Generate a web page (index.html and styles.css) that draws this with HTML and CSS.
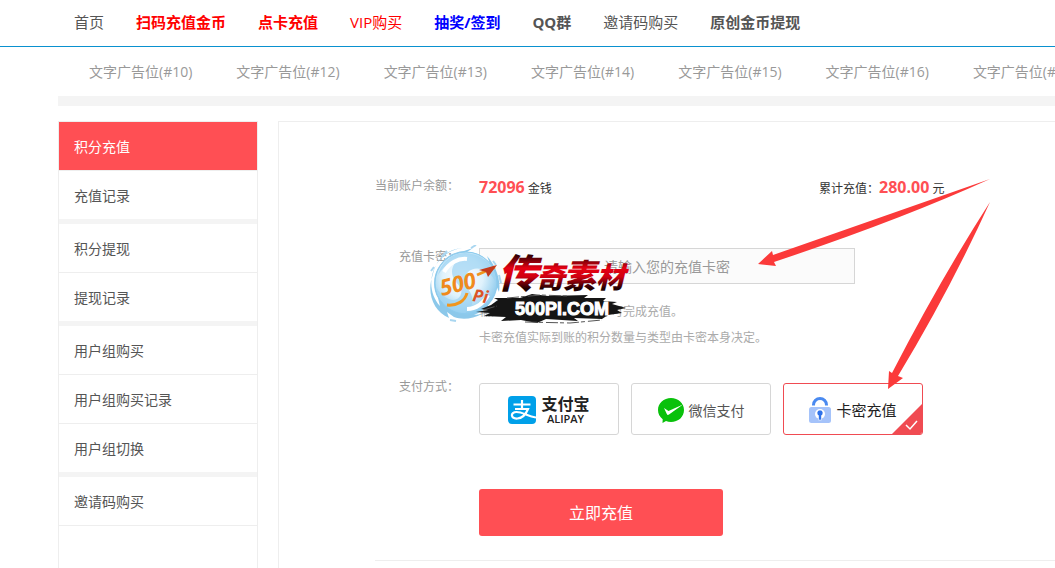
FILE: index.html
```html
<!DOCTYPE html>
<html lang="zh-CN">
<head>
	<meta charset="utf-8">
	<title>积分充值</title>
	<meta name="viewport" content="width=device-width, initial-scale=1">
	<link rel="stylesheet" href="styles.css">
</head>
<body>
	<header class="header">
		<nav class="nav">
			<a href="#">首页</a>
			<a href="#" class="red bold">扫码充值金币</a>
			<a href="#" class="red bold">点卡充值</a>
			<a href="#" class="red">VIP购买</a>
			<a href="#" class="blue bold">抽奖/签到</a>
			<a href="#" class="bold">QQ群</a>
			<a href="#">邀请码购买</a>
			<a href="#" class="bold">原创金币提现</a>
		</nav>
	</header>

	<div class="wrap">
		<div class="ads">
			<a href="#">文字广告位(#10)</a>
			<a href="#">文字广告位(#12)</a>
			<a href="#">文字广告位(#13)</a>
			<a href="#">文字广告位(#14)</a>
			<a href="#">文字广告位(#15)</a>
			<a href="#">文字广告位(#16)</a>
			<a href="#">文字广告位(#17)</a>
		</div>

		<div class="content">
			<aside class="side">
				<ul>
					<li><a href="#" class="active">积分充值</a></li>
					<li><a href="#">充值记录</a></li>
				</ul>
				<ul>
					<li><a href="#">积分提现</a></li>
					<li><a href="#">提现记录</a></li>
				</ul>
				<ul>
					<li><a href="#">用户组购买</a></li>
					<li><a href="#">用户组购买记录</a></li>
					<li><a href="#">用户组切换</a></li>
				</ul>
				<ul>
					<li><a href="#">邀请码购买</a></li>
				</ul>
			</aside>

			<main class="main">
				<form class="pay-form">
					<div class="row">
						<span class="label">当前账户余额：</span>
						<div class="balance">
							<p><strong>72096</strong> 金钱</p>
							<p>累计充值：<strong>280.00</strong> 元</p>
						</div>
					</div>

					<div class="row row-card">
						<label class="label" for="card">充值卡密：</label>
						<div>
							<input type="text" id="card" class="card-input" placeholder="请输入您的充值卡密">
							<div class="tips">
								<p>输入正确的充值卡密后即可完成充值。</p>
								<p>卡密充值实际到账的积分数量与类型由卡密本身决定。</p>
							</div>
						</div>
					</div>

					<div class="row row-type" role="radiogroup" aria-labelledby="pay-label">
						<span class="label" id="pay-label">支付方式：</span>
						<div class="types">
							<label class="type">
								<input type="radio" name="pay" value="alipay">
								<svg width="28" height="28" viewBox="0 0 28 28" aria-hidden="true">
									<rect width="28" height="28" rx="4" fill="#00a0e9"/>
									<path d="M5.500 8.500h17M14 4v9M7 13h13c-2 5-5.500 9-10.500 9.500-7 .5-7.500-6.500-1-6.500 6 0 11 4 19.500 5.500" fill="none" stroke="#fff" stroke-width="2.200"/>
								</svg>
								<span class="alipay"><b>支付宝</b><small>ALIPAY</small></span>
							</label>
							<label class="type">
								<input type="radio" name="pay" value="wechat">
								<svg width="26" height="26" viewBox="0 0 26 26" aria-hidden="true">
									<path d="M13 1c7.200 0 13 5 13 12s-5.800 12-13 12c-1.800 0-3.500-.3-5-.9L4.500 26l.2-3.800C1.800 20 0 16.800 0 13 0 6 5.800 1 13 1z" fill="#09c10b"/>
									<path d="M6 11l4.500 3L25 7.500 11 17.500c-1 .7-1.800.4-2.200-.5z" fill="#fff"/>
								</svg>
								<span class="wechat">微信支付</span>
							</label>
							<label class="type">
								<input type="radio" name="pay" value="card" checked>
								<svg width="22" height="26" viewBox="0 0 22 26" aria-hidden="true">
									<path d="M4.500 8.500V8a6.500 6.500 0 0 1 13 0v.5" fill="none" stroke="#4a8af0" stroke-width="3"/>
									<rect y="10" width="22" height="16" rx="2.500" fill="#a5c3fa"/>
									<circle cx="11" cy="17" r="5" fill="#fff"/>
									<path d="M11 13a3 3 0 0 1 1.500 5.600V23h-3v-4.400A3 3 0 0 1 11 13z" fill="#2f72e8" stroke="#fff" stroke-width=".6"/>
								</svg>
								<span>卡密充值</span>
								<svg class="tick" width="30" height="30" viewBox="0 0 30 30" aria-hidden="true">
									<path d="M30 0v30H0z" fill="#f04b52"/>
									<path d="M14 21l4 4 7-8" fill="none" stroke="#fff" stroke-width="1.500"/>
								</svg>
							</label>
						</div>
					</div>

					<button type="submit" class="submit">立即充值</button>
					<div class="line"></div>
				</form>

				<svg class="stamp" width="200" height="80" viewBox="0 0 200 80" role="img" aria-label="传奇素材 500Pi.COM">
					<defs>
						<radialGradient id="ball" cx=".45" cy=".4" r=".65">
							<stop offset="0" stop-color="#fff"/>
							<stop offset=".5" stop-color="#dff2fc"/>
							<stop offset="1" stop-color="#7cc2ea"/>
						</radialGradient>
						<linearGradient id="ink" x1="0" y1="0" x2="0" y2="1">
							<stop offset=".2" stop-color="#1a0000"/>
							<stop offset=".45" stop-color="#e60012"/>
							<stop offset=".6" stop-color="#d00010"/>
							<stop offset=".8" stop-color="#200"/>
						</linearGradient>
					</defs>
					<!-- splashing water ball -->
					<path d="M35 3C20 4 8 14 4 27c-4 12-1 25 7 34l-2-8C3 43 4 29 11 20c6-9 14-13 24-14l9-3-6 4c10 0 18 5 23 12l-3-8c9 10 14 24 12 36l-3-7c-1 15-10 25-22 30l8-1c-9 5-20 6-28 3l-7-5 2 6C6 67-1 52 2 36l3-11C9 13 18 4 35 3z" fill="#8cc8ea"/>
					<path d="M13 12l5-6M5 22l-3 4M64 16l3 4M70 30l2 8M68 56l-5 8M27 76l-6-1M42 3l5-3" stroke="#a9d6f0" stroke-width="2"/>
					<circle cx="37" cy="38" r="31" fill="url(#ball)" stroke="#8ccbee"/>
					<path d="M9 30c4-16 19-25 34-21 15 3 24 16 24 29-5-13-20-19-28-11-6 7-2 14 2 20 5 9 2 17-5 21C20 68 8 54 7 42c8 14 22 17 25 7 2-7-5-10-8-17-3-8 1-15 8-18-9 1-17 7-23 16z" fill="#9dd3f2" opacity=".7"/>
					<path d="M15 27c5-9 14-14 23-13M59 50c-4 8-12 14-21 14" fill="none" stroke="#fff" stroke-width="4"/>
					<path d="M18 60c10 1 18-4 20-12M48 30l18-8" fill="none" stroke="#f0961e" stroke-width="3"/>
					<path d="M50 25l18-5-9 12-2-5z" fill="#c43b1d"/>
					<text x="13" y="51" class="stamp-num" transform="rotate(-14 13 51)">500</text>
					<text x="43" y="56" class="stamp-pi" transform="rotate(8 43 56)">Pi</text>
					<!-- ink brush under the address -->
					<path d="M52 64l10-4 7-5-4-2 26 0 12-4 16 2 40-1-4 3 22 0-3 3 14 1-5 2 14 4-9 2 5 3-14 2-6 4-28-1 4 3-32-2-9 4-16-3-20 1 5-4-22-1 6-3-14-1 12-2z" fill="#151515"/>
					<path d="M78 53l34-3 26 1M96 77l45 1 32-3M54 65l14-4" fill="none" stroke="#555" stroke-dasharray="12 2 4 3"/>
					<text y="43" class="stamp-title"><tspan x="69" font-size="40">传</tspan><tspan x="107" font-size="29">奇</tspan><tspan x="134" font-size="33">素</tspan><tspan x="167" font-size="29">材</tspan></text>
					<text x="86" y="70" class="stamp-url">500Pi.COM</text>
				</svg>

				<svg class="arrows" width="240" height="220" viewBox="755 175 240 220" aria-hidden="true">
					<path d="M758 264l14-13 1 4 217-76Q900 220 774 262l2 4z"/>
					<path d="M888 389l1-18 3 2Q940 280 990 202 950 290 898 376l5 2z"/>
				</svg>
			</main>
		</div>
	</div>
</body>
</html>
```
FILE: styles.css
```css
* {
	box-sizing: border-box;
	margin: 0;
	padding: 0;
}

body {
	overflow: hidden;
	background: #fff;
	color: #555;
	font-family: "Open Sans", "Noto Sans CJK SC", sans-serif;
	font-size: 14px;
}

a {
	color: inherit;
	text-decoration: none;
}

ul {
	list-style: none;
}

.header {
	border-bottom: 1px solid #0a91cf;
}

.nav {
	display: flex;
	gap: 32px;
	padding: 0 0 2px 74px;
	font-size: 15px;
	line-height: 44px;
	white-space: nowrap;
}

.red {
	color: #f00;
}

.blue {
	color: #00f;
}

.bold {
	font-weight: bold;
}

.wrap {
	margin-left: 58px;
}

/* text ads */
.ads {
	display: flex;
	gap: 44px;
	padding-left: 31px;
	border-bottom: 10px solid #f4f4f4;
	color: #999;
	line-height: 49px;
	white-space: nowrap;
	overflow: hidden;
}

.ads a {
	flex: none;
}

.content {
	display: flex;
	gap: 20px;
	margin: 15px -1px 0 0;
	min-height: 100vh;
}

/* left menu */
.side {
	flex: none;
	width: 200px;
	border: 1px solid #eee;
}

.side ul {
	border-bottom: 5px solid #f4f4f4;
}

.side ul:last-child {
	border-bottom: 1px solid #eee;
}

.side li + li {
	border-top: 1px solid #eee;
}

.side a {
	display: block;
	padding: 1px 0 0 15px;
	line-height: 47px;
}

.side .active {
	background: #ff4f54;
	color: #fff;
}

.main {
	position: relative;
	flex: 1;
	border: 1px solid #eee;
}

.pay-form {
	padding: 55px 0 0 96px;
	font-size: 12px;
}

.row {
	display: grid;
	grid-template-columns: 84px 1fr;
	gap: 20px;
}

.label {
	color: #999;
	line-height: 18px;
	text-align: right;
}

.balance {
	display: grid;
	grid-template-columns: 340px 1fr;
	color: #333;
	line-height: 20px;
}

.balance strong {
	color: #ff4f54;
	font-size: 16px;
}

.row-card {
	margin-top: 49px;
}

.card-input {
	display: block;
	width: 376px;
	height: 36px;
	border: 1px solid #d6d6d6;
	background: #fbfbfb;
	font: inherit;
	font-size: 14px;
	text-align: center;
}

.card-input::placeholder {
	color: #999;
}

.tips {
	margin-top: 15px;
	color: #aaa;
	line-height: 26px;
}

.row-type {
	margin-top: 27px;
}

.types {
	display: flex;
	gap: 12px;
	padding-top: 5px;
}

.type {
	position: relative;
	display: flex;
	align-items: center;
	justify-content: center;
	gap: 5px;
	width: 140px;
	height: 52px;
	padding-top: 1px;
	border: 1px solid #d6d6d6;
	border-radius: 3px;
	color: #222;
	font-size: 15px;
	overflow: hidden;
	cursor: pointer;
}

.type:has(input:checked) {
	border-color: #f04b52;
}

.type input {
	position: absolute;
	opacity: 0;
}

.tick {
	position: absolute;
	right: 0;
	bottom: 0;
}

.alipay {
	display: grid;
	gap: 2px;
	font-size: 16px;
	line-height: 16px;
	text-align: center;
}

.alipay small {
	font-size: 11px;
	font-weight: 600;
	line-height: 10px;
}

.wechat {
	color: #555;
	font-size: 14px;
}

.submit {
	display: block;
	width: 244px;
	height: 47px;
	margin: 54px 0 24px 104px;
	padding-bottom: 1px;
	border: 0;
	border-radius: 3px;
	background: #ff4f54;
	color: #fff;
	font: inherit;
	font-size: 16px;
	cursor: pointer;
}

.line {
	border-top: 1px solid #eee;
}

/* things lying over the form */
.stamp,
.arrows {
	position: absolute;
	pointer-events: none;
}

.stamp {
	top: 123px;
	left: 150px;
}

.arrows {
	top: 53px;
	left: 476px;
	fill: #fb3a3a;
}

.stamp-num {
	fill: #f08a1c;
	font-size: 22px;
	font-style: italic;
	font-weight: bold;
}

.stamp-pi {
	fill: #dc5428;
	font-size: 17px;
	font-style: italic;
	font-weight: bold;
}

.stamp-title {
	fill: url(#ink);
	font-family: "Noto Sans CJK SC", sans-serif;
	font-style: italic;
	font-weight: 900;
}

.stamp-url {
	fill: #fff;
	stroke: #fff;
	font-family: "Liberation Sans", sans-serif;
	font-size: 18px;
	font-weight: bold;
}
```
